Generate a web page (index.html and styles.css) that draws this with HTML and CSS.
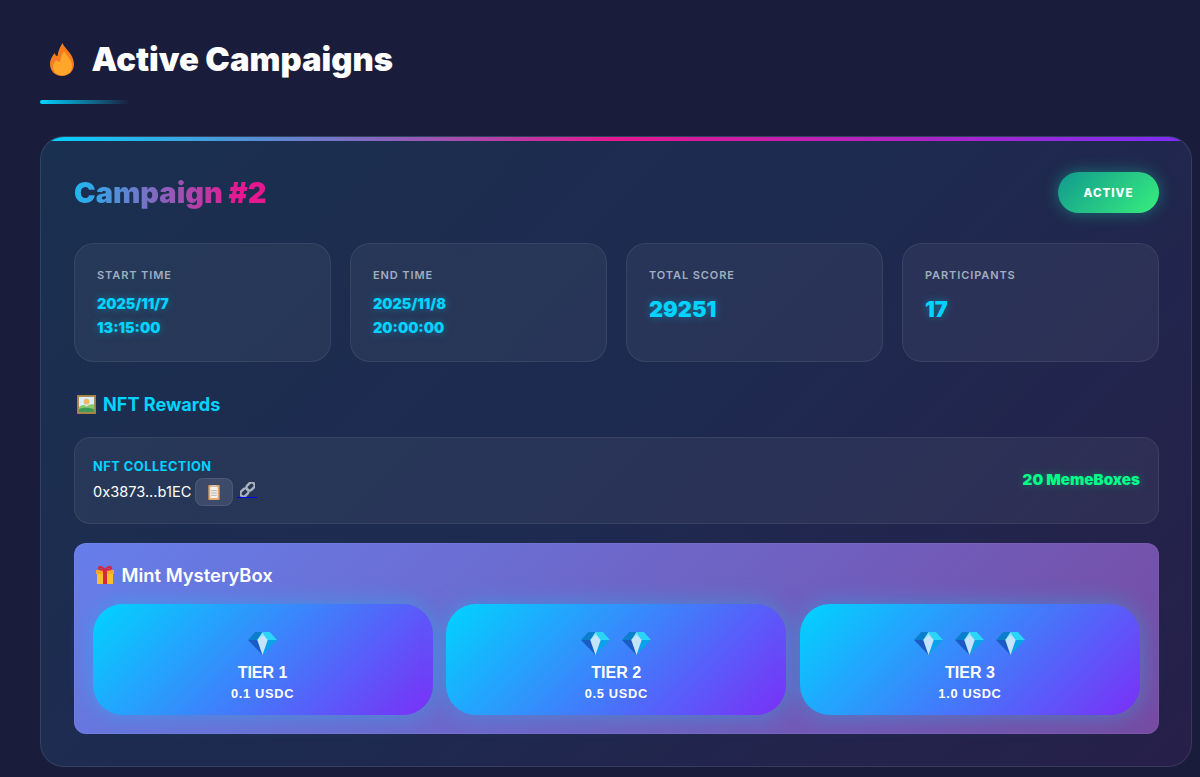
FILE: index.html
```html
<!DOCTYPE html>
<html lang="en">
<head>
<meta charset="utf-8">
<title>Active Campaigns</title>
<link rel="stylesheet" href="styles.css">
</head>
<body>
<svg class="defs" width="0" height="0" aria-hidden="true">
  <defs>
    <symbol id="gem" viewBox="0 0 28 23" preserveAspectRatio="none">
      <path fill="#0b7fcb" d="M7 0h7L9 8H0z"/>
      <path fill="#1a5bc4" d="M0 8h9l5 15z"/>
      <path fill="#29d6f7" d="M14 0h7l7 8H19z"/>
      <path fill="#0aa3ea" d="M28 8H19l-5 15z"/>
      <path fill="#7fe3fb" d="M14 0l5 8H9z"/>
      <path fill="#c4e4fb" d="M9 8l5-5 5 5-5 15z"/>
    </symbol>
  </defs>
</svg>
<main class="page">
  <h1 class="page-title">
    <svg class="ico-fire" viewBox="0 0 24 33"><path fill="#f47b20" d="M12.500 0C14 5 24 11 24 21c0 7-5 12-12 12S0 28 0 21c0-5 3-9 5-11 0 2 1 3 2.500 3C8 8 10 4 12.500 0z"/><path fill="#ffa62b" d="M14 8c2 4 8 8 8 15 0 6-4.500 9.500-9.500 9.500-5.500 0-9.500-3.500-9.500-8.500 0-3 1.500-5.500 4-7 .5 1 1.500 2 3 2 .5-4 2-8 4-11z"/></svg>
    <span>Active Campaigns</span>
  </h1>
  <div class="title-rule"></div>

  <section class="card">
    <header class="card-head">
      <h2 class="card-title">Campaign #2</h2>
      <span class="badge">ACTIVE</span>
    </header>

    <div class="stats">
      <div class="stat"><div class="stat-label">START TIME</div><div class="stat-date">2025/11/7<br>13:15:00</div></div>
      <div class="stat"><div class="stat-label">END TIME</div><div class="stat-date">2025/11/8<br>20:00:00</div></div>
      <div class="stat"><div class="stat-label">TOTAL SCORE</div><div class="stat-num">29251</div></div>
      <div class="stat"><div class="stat-label">PARTICIPANTS</div><div class="stat-num">17</div></div>
    </div>

    <h3 class="rewards-title">
      <svg class="ico-pic" viewBox="0 0 20 20"><rect width="20" height="20" fill="#a5803f"/><rect x="2" y="2" width="16" height="16" fill="#d8eefa"/><circle cx="10" cy="7" r="3" fill="#f3b562"/><path fill="#8cc96a" d="M2 13c3-3 5-3 8-1 3-2 5-3 8-2v8H2z"/><path fill="#3f9a58" d="M2 15c4-2 10-2 16 0v3H2z"/></svg>
      <span>NFT Rewards</span>
    </h3>

    <div class="collection">
      <div class="collection-info">
        <div class="collection-label">NFT COLLECTION</div>
        <div class="collection-addr">
          <span>0x3873...b1EC</span>
          <button class="copy-btn" type="button" aria-label="Copy">
            <svg class="ico-clip" viewBox="0 0 12 16"><rect width="12" height="16" rx="1" fill="#e5a468"/><rect x="2" y="2" width="8" height="12" fill="#f4f1ec"/><path stroke="#9fb0c4" stroke-width="1" d="M3 6h6M3 8.500h6M3 11h6"/><rect x="3.500" y="0" width="5" height="2" fill="#c9c4bc"/></svg>
          </button>
          <a class="chain-link" href="#" aria-label="Open">
            <svg class="ico-chain" viewBox="0 0 16 16" fill="none" stroke="#aab2bd" stroke-width="2.600"><rect x="8" y="0" width="6.500" height="9.500" rx="3.200" transform="rotate(45 11.250 4.750)"/><rect x="1.500" y="6.500" width="6.500" height="9.500" rx="3.200" transform="rotate(45 4.750 11.250)"/></svg>
          </a>
        </div>
      </div>
      <div class="collection-count">20 MemeBoxes</div>
    </div>

    <div class="mint">
      <h3 class="mint-title">
        <svg class="ico-gift" viewBox="0 0 18 18"><rect x="1" y="7" width="16" height="11" fill="#fbbf2c"/><rect y="4" width="18" height="4" fill="#f7a825"/><rect x="7" y="3" width="4" height="15" fill="#d2293f"/><path fill="none" stroke="#d2293f" stroke-width="2" d="M9 4C7 1 4 0 3 1.500 2 3 5 4 9 4c4 0 7-1 6-2.500C14 0 11 1 9 4z"/></svg>
        <span>Mint MysteryBox</span>
      </h3>
      <div class="tiers">
        <button class="tier" type="button">
          <span class="gems"><svg class="gem"><use href="#gem"/></svg></span>
          <span class="tier-name">TIER 1</span>
          <span class="tier-price">0.1 USDC</span>
        </button>
        <button class="tier" type="button">
          <span class="gems"><svg class="gem"><use href="#gem"/></svg><svg class="gem"><use href="#gem"/></svg></span>
          <span class="tier-name">TIER 2</span>
          <span class="tier-price">0.5 USDC</span>
        </button>
        <button class="tier" type="button">
          <span class="gems"><svg class="gem"><use href="#gem"/></svg><svg class="gem"><use href="#gem"/></svg><svg class="gem"><use href="#gem"/></svg></span>
          <span class="tier-name">TIER 3</span>
          <span class="tier-price">1.0 USDC</span>
        </button>
      </div>
    </div>
  </section>
</main>
</body>
</html>
```
FILE: styles.css
```css
* { box-sizing: border-box; }
html, body { margin: 0; height: 100%; overflow: hidden; }
body {
  background: #1a1c3c;
  color: #fff;
  font-family: Inter, "Liberation Sans", sans-serif;
}
.defs { display: block; height: 0; }
.page { padding: 40px 8px 10px 40px; }

.page-title {
  display: flex;
  align-items: center;
  gap: 17.500px;
  margin: 0 0 0 10px;
  height: 38px;
  font-size: 32.800px;
  font-weight: 900;
  line-height: 38px;
}
.ico-fire { width: 24px; height: 33px; flex: none; }
.title-rule {
  width: 90px;
  height: 4px;
  margin: 22px 0 32px;
  border-radius: 2px;
  background: linear-gradient(90deg, #00d4ff, rgba(0, 212, 255, 0));
}

.card {
  position: relative;
  height: 631px;
  padding: 35px 32px 32px 33px;
  border: 1px solid rgba(255, 255, 255, 0.1);
  border-radius: 24px;
  overflow: hidden;
  background: linear-gradient(135deg, #1a3050 0%, #1e2a50 50%, #261f49 100%);
  background-origin: border-box;
}
.card::before {
  content: "";
  position: absolute;
  top: 0;
  left: 0;
  right: 0;
  height: 4px;
  background: linear-gradient(90deg, #00d4ff, #e6188f 50%, #7b2ff7);
}
.card-head {
  display: flex;
  align-items: center;
  justify-content: space-between;
  height: 41px;
}
.card-title {
  margin: 0;
  font-size: 29px;
  font-weight: 900;
  line-height: 41px;
  background: linear-gradient(90deg, #1fb8f2, #e6188f 85%);
  -webkit-background-clip: text;
  background-clip: text;
  color: transparent;
}
.badge {
  display: flex;
  align-items: center;
  justify-content: center;
  width: 101px;
  height: 41px;
  border-radius: 21px;
  background: linear-gradient(135deg, #11998e, #38ef7d);
  box-shadow: 0 0 16px rgba(17, 200, 160, 0.45);
  font-size: 11.500px;
  font-weight: 800;
  letter-spacing: 1px;
}

.stats {
  display: grid;
  grid-template-columns: repeat(4, 1fr);
  gap: 19px;
  margin-top: 30px;
}
.stat {
  height: 119px;
  padding: 24px 22px;
  border: 1px solid rgba(255, 255, 255, 0.07);
  border-radius: 20px;
  background: rgba(255, 255, 255, 0.05);
}
.stat-label {
  font-size: 11px;
  font-weight: 600;
  line-height: 15px;
  letter-spacing: 0.900px;
  color: #a0aec0;
}
.stat-date, .stat-num {
  color: #00d4ff;
  font-weight: 900;
  text-shadow: 0 0 8px rgba(0, 212, 255, 0.4);
}
.stat-date { margin-top: 9px; font-size: 14.400px; line-height: 23.500px; }
.stat-num { margin-top: 10px; font-size: 21.800px; line-height: 32px; }

.rewards-title {
  display: flex;
  align-items: center;
  gap: 7px;
  margin: 30px 0 0 3px;
  height: 24px;
  font-size: 18.100px;
  font-weight: 700;
  color: #00d4ff;
}
.ico-pic { width: 19px; height: 19px; flex: none; }

.collection {
  display: flex;
  align-items: center;
  justify-content: space-between;
  height: 87px;
  margin-top: 21px;
  padding: 0 18px;
  border: 1px solid rgba(255, 255, 255, 0.08);
  border-radius: 16px;
  background: rgba(255, 255, 255, 0.05);
}
.collection-info { padding-top: 4px; }
.collection-label {
  font-size: 12.800px;
  font-weight: 700;
  line-height: 15px;
  letter-spacing: 0.500px;
  color: #00d4ff;
}
.collection-addr {
  display: flex;
  align-items: center;
  gap: 4px;
  margin-top: 4px;
  font-size: 14.600px;
  line-height: 28px;
}
.copy-btn {
  display: flex;
  align-items: center;
  justify-content: center;
  width: 38px;
  height: 28px;
  padding: 0;
  border: 1px solid rgba(255, 255, 255, 0.08);
  border-radius: 8px;
  background: rgba(255, 255, 255, 0.1);
}
.ico-clip { width: 12px; height: 15px; }
.chain-link {
  display: flex;
  justify-content: center;
  width: 20px;
  height: 20px;
  margin: 0 0 8px;
  border-bottom: 1px solid #0000ee;
}
.ico-chain { width: 15px; height: 15px; margin-top: 4px; }
.collection-count {
  margin-bottom: 2px;
  font-size: 15.200px;
  font-weight: 900;
  color: #00ff88;
  text-shadow: 0 0 8px rgba(0, 255, 136, 0.3);
}

.mint {
  height: 191px;
  margin-top: 19px;
  padding: 19px 18px 19px 17.500px;
  border: 1px solid rgba(255, 255, 255, 0.05);
  border-radius: 12px;
  background: linear-gradient(135deg, #667eea, #764ba2);
  background-origin: border-box;
}
.mint-title {
  display: flex;
  align-items: center;
  gap: 8px;
  margin: 0 0 0 3px;
  height: 24px;
  font-size: 18.400px;
  font-weight: 600;
}
.ico-gift { width: 18px; height: 18px; flex: none; }
.tiers {
  display: grid;
  grid-template-columns: repeat(3, 1fr);
  gap: 13.600px;
  margin-top: 17px;
}
.tier {
  display: flex;
  flex-direction: column;
  align-items: center;
  height: 111px;
  padding: 28px 0 0;
  border: 0;
  border-radius: 30px;
  background: linear-gradient(135deg, #00d4ff, #7b2ff7);
  box-shadow: 0 0 24px rgba(0, 212, 255, 0.35);
  color: #fff;
  font-family: "Liberation Sans", Arial, sans-serif;
  font-weight: 700;
}
.gems { display: flex; gap: 12px; height: 23px; }
.gem { width: 29px; height: 23px; display: block; }
.tier-name { margin-top: 9px; font-size: 16px; line-height: 18px; }
.tier-price { margin-top: 4px; font-size: 12.800px; line-height: 16px; letter-spacing: 0.700px; }
```
